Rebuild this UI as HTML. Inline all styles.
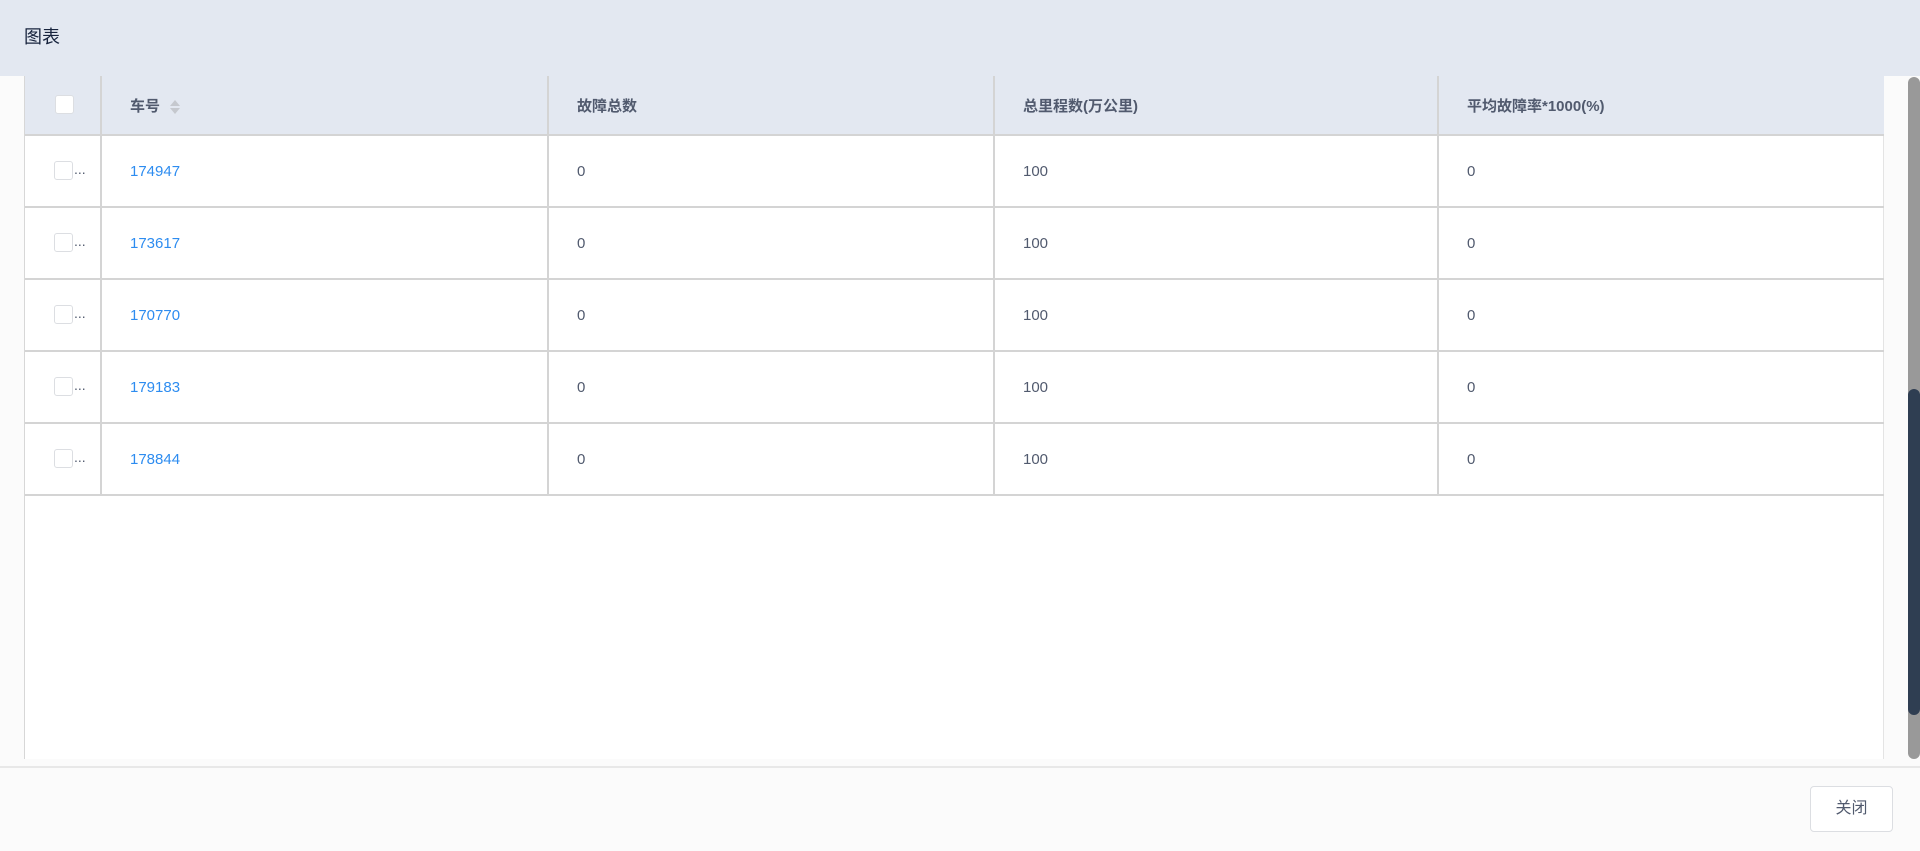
<!DOCTYPE html>
<html><head><meta charset="utf-8"><style>
*{margin:0;padding:0;box-sizing:border-box}
body{width:1920px;height:851px;overflow:hidden;background:#fbfbfb;font-family:"Liberation Sans","Noto Sans CJK SC",sans-serif;position:relative}
.hd{position:absolute;left:0;top:0;width:1920px;height:76px;background:#e3e8f1;color:#17233d;font-size:18px;line-height:74px;padding-left:24px}
.tbl{position:absolute;left:24px;top:76px;width:1860px;height:683px;background:#fff;border-left:1px solid #d7d7d7;border-right:1px solid #e4e4e4}
table{border-collapse:collapse;width:1859px;table-layout:fixed}
th,td{border-right:2px solid #d4d4d4;border-bottom:2px solid #d4d4d4;text-align:left;padding-left:28px;font-size:15px;color:#515a6e}
th{height:59px;background:#e3e8f1;font-weight:bold}
td{height:72px}
th:first-child,td:first-child{padding-left:0;position:relative}
th:last-child,td:last-child{border-right:none}
.cb{position:absolute;left:29px;width:19px;height:19px;border:1px solid #dcdee2;border-radius:3px;background:#fff;top:50%;margin-top:-10px}
.dots{position:absolute;left:49px;top:50%;margin-top:-10px;color:#515a6e;font-size:14px}
a{color:#2d8cf0;text-decoration:none}
.sort{display:inline-block;vertical-align:middle;margin-left:10px;width:10px;height:16px;position:relative}
.sort:before{content:"";position:absolute;left:0;top:1px;border:5px solid transparent;border-bottom:6px solid #c5c8ce;border-top:0}
.sort:after{content:"";position:absolute;left:0;top:9px;border:5px solid transparent;border-top:6px solid #c5c8ce;border-bottom:0}
.sb{position:absolute;left:1908px;top:77px;width:12px;height:682px;background:#999;border-radius:6px}
.th{position:absolute;left:1908px;top:389px;width:12px;height:326px;background:#2f3e52;border-radius:6px}
.ft{position:absolute;left:0;top:766px;width:1920px;height:85px;border-top:2px solid #e8e8e8;background:#fbfbfb}
.btn{position:absolute;left:1810px;top:786px;width:83px;height:46px;border:1px solid #dcdee2;border-radius:4px;background:#fff;color:#515a6e;font-size:16px;text-align:center;line-height:44px}
</style></head><body>
<div class="hd">图表</div>
<div class="tbl"><table>
<colgroup><col style="width:76px"><col style="width:447px"><col style="width:446px"><col style="width:444px"><col></colgroup>
<tr><th><span class="cb" style="left:30px"></span></th><th>车号<span class="sort"></span></th><th>故障总数</th><th>总里程数(万公里)</th><th>平均故障率*1000(%)</th></tr>
<tr><td><span class="cb"></span><span class="dots">...</span></td><td><a>174947</a></td><td>0</td><td>100</td><td>0</td></tr>
<tr><td><span class="cb"></span><span class="dots">...</span></td><td><a>173617</a></td><td>0</td><td>100</td><td>0</td></tr>
<tr><td><span class="cb"></span><span class="dots">...</span></td><td><a>170770</a></td><td>0</td><td>100</td><td>0</td></tr>
<tr><td><span class="cb"></span><span class="dots">...</span></td><td><a>179183</a></td><td>0</td><td>100</td><td>0</td></tr>
<tr><td><span class="cb"></span><span class="dots">...</span></td><td><a>178844</a></td><td>0</td><td>100</td><td>0</td></tr>
</table></div>
<div class="sb"></div><div class="th"></div>
<div class="ft"></div>
<div class="btn">关闭</div>
</body></html>
